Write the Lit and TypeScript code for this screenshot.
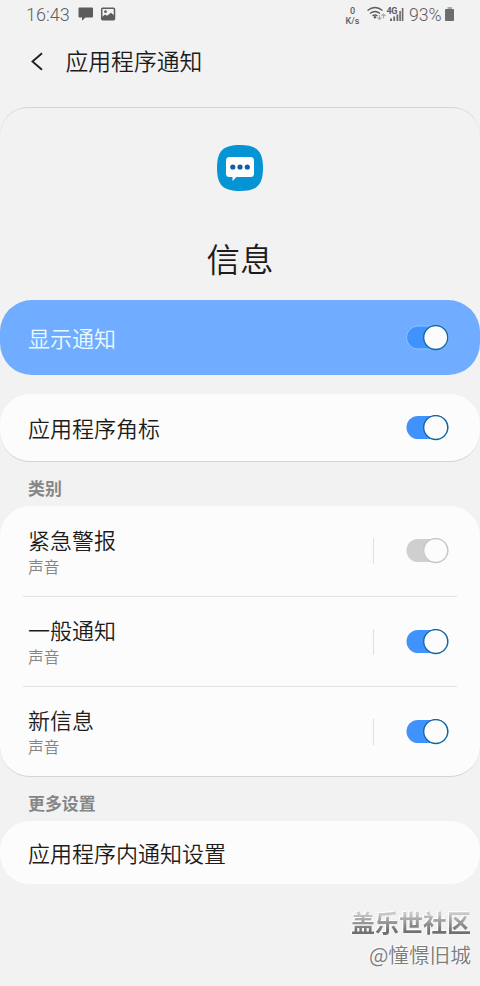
import { LitElement, html, css } from "lit";
import { customElement, property } from "lit/decorators.js";
import { classMap } from "lit/directives/class-map.js";

@customElement("toggle-switch")
class ToggleSwitch extends LitElement {
  @property() tone = "on";

  static styles = css`
    :host { display: block; width: 44px; height: 26px; }
    svg { display: block; }
    .track { fill: #4093ff; }
    .thumb { fill: #fcfcfc; stroke: #14659f; stroke-width: 1.3; }
    .lit .track { stroke: #92c2fd; stroke-width: 1; }
    .off .track { fill: #cfcfcf; }
    .off .thumb { stroke: #c6c6c6; }
  `;

  render() {
    return html`<svg class=${classMap({ lit: this.tone === "lit", off: this.tone === "off" })} width="44" height="26" viewBox="0 0 44 26">
      <rect class="track" x="0.500" y="1" width="42" height="23" rx="11.500"></rect>
      <circle class="thumb" cx="29.700" cy="12.500" r="12"></circle>
    </svg>`;
  }
}

interface Category {
  name: string;
  detail: string;
  tone: string;
}

@customElement("app-root")
class AppRoot extends LitElement {
  private categories: Category[] = [
    { name: "紧急警报", detail: "声音", tone: "off" },
    { name: "一般通知", detail: "声音", tone: "on" },
    { name: "新信息", detail: "声音", tone: "on" },
  ];

  static styles = css`
    :host {
      display: flex; flex-direction: column; box-sizing: border-box;
      width: 480px; height: 986px; overflow: hidden;
      background: #f2f2f2; color: #1c1c1c;
      font-family: Roboto, "Noto Sans CJK SC", sans-serif;
      font-size: 22px; font-weight: 350; white-space: nowrap;
    }
    svg { display: block; flex: none; }
    .status { display: flex; height: 30px; box-sizing: border-box; padding: 0 25px 0 26px; align-items: center; color: #5e5e5e; font-size: 18px; }
    .time { width: 52px; line-height: 30px; }
    .notes { flex: 1; }
    .rate { width: 17px; margin-right: 6px; font-size: 9px; text-align: center; font-weight: 500; padding-top: 1px; }
    .rate div { line-height: 10px; }
    .level { width: 36px; margin-left: 5px; font-size: 17.7px; line-height: 30px; }
    .header { display: flex; height: 77px; box-sizing: border-box; padding: 0 0 13px 29.5px; align-items: center; }
    .title { margin-left: 22px; padding-top: 2px; font-size: 22.8px; line-height: 34px; }
    .hero { box-sizing: border-box; height: 193px; border-top: 1px solid #d6d6d6; border-radius: 28px 28px 0 0; display: flex; flex-direction: column; align-items: center; padding-top: 37px; }
    .app { margin-top: 45px; font-size: 33.5px; line-height: 50px; }
    .bar { display: flex; flex: none; box-sizing: border-box; align-items: center; justify-content: space-between; padding: 0 30px 0 28px; line-height: 32px; }
    .bar span { padding-top: 5px; }
    .master { height: 75px; border-radius: 32px; background: #70acff; color: #e9fbff; margin-bottom: 19px; }
    .card { background: #fcfcfc; border-radius: 30px; border-bottom: 1px solid #d4d4d4; }
    .badge { height: 68px; }
    .more { height: 63px; border-bottom: 0; }
    .label { height: 44px; box-sizing: border-box; padding: 13px 0 0 28px; font-size: 16.9px; line-height: 28px; color: #868686; font-weight: 700; }
    .list { height: 271px; box-sizing: border-box; flex: none; }
    .row { display: flex; box-sizing: border-box; height: 90px; margin: 0 23px; padding: 0 7px 0 5px; align-items: center; }
    .row + .row { border-top: 1px solid #e3e3e3; }
    .copy { flex: 1; padding-top: 5px; }
    .name { line-height: 28px; }
    .detail { font-size: 15.7px; line-height: 24px; color: #858585; }
    .rule { width: 1px; height: 26px; background: #dfdfdf; margin-right: 32px; }
    .credit { margin: 21px 9px 0 0; display: flex; flex-direction: column; align-items: flex-end; font-family: "Noto Sans CJK SC", sans-serif; }
    .site { font-size: 24px; line-height: 33px; font-weight: 700; color: transparent; background: linear-gradient(#c8c8c8 28%, #9c9c9c 50%, #707070 80%); -webkit-background-clip: text; background-clip: text; filter: drop-shadow(-1px -1px 0 #fff); }
    .user { font-size: 20.7px; line-height: 32px; color: #7c7c7c; text-shadow: -1px -1px #fff; }
  `;

  private statusBar() {
    return html`<div class="status">
      <div class="time">16:43</div>
      <svg class="notes" height="30" viewBox="0 0 266 30" preserveAspectRatio="xMinYMid meet">
        <path d="M1.500 7.500H14q1 0 1 1v8q0 1-1 1H7.500L4 20.800v-3.300H1.500q-1 0-1-1V8.500q0-1 1-1Z" fill="#5c5c5c"></path>
        <rect x="23.700" y="8.200" width="12.800" height="11.600" rx="1" fill="none" stroke="#5c5c5c" stroke-width="1.500"></rect>
        <path d="M24 17l3-2.500 2 1.300 4-3 3.500 3V20H24Z" fill="#5c5c5c"></path>
        <circle cx="27.500" cy="11.700" r="1.400" fill="#5c5c5c"></circle>
      </svg>
      <div class="rate"><div>0</div><div>K/s</div></div>
      <svg width="37" height="30" viewBox="0 0 37 30">
        <g fill="none" stroke="#5c5c5c" stroke-width="1.400">
          <path d="M0.500 10.500Q8 4.500 15.500 10.500M3 13.500Q8 9.500 13 13.500M5.500 16Q8 14 10.500 16"></path>
        </g>
        <circle cx="8" cy="17.300" r="1.200" fill="#5c5c5c"></circle>
        <path d="M12.500 15v4.500m-2-2 2 2 2-2M16.500 18.500v-4.500m-2 2 2-2 2 2" fill="none" stroke="#aaa" stroke-width="1.100"></path>
        <text x="19.500" y="13.500" font-size="9" font-weight="700" fill="#5c5c5c" textLength="11">4G</text>
        <path d="M23 18.500h2v2.500h-2zM26.300 16.500h1.800v4.500h-1.800zM29.500 14.500h1.800v6.500h-1.800zM32.300 11h1.600v10h-1.600zM34.800 8h1.600v13h-1.600z" fill="#6a6a6a"></path>
      </svg>
      <div class="level">93%</div>
      <svg width="10" height="30" viewBox="0 0 10 30">
        <path d="M2.500 7h4.500v2H2.500z" fill="#aaa"></path>
        <rect x="0" y="9" width="9" height="12" rx="0.700" fill="#6d6d6d"></rect>
      </svg>
    </div>`;
  }

  render() {
    return html`
      ${this.statusBar()}
      <div class="header">
        <svg width="14" height="22" viewBox="0 0 14 22"><path d="M12 2.200 2.500 10.500l9.500 8.300" fill="none" stroke="#222" stroke-width="1.900"></path></svg>
        <div class="title">应用程序通知</div>
      </div>
      <div class="hero">
        <svg width="46" height="46" viewBox="0 0 46 46">
          <path d="M23 0C40 0 46 6 46 23S40 46 23 46 0 40 0 23 6 0 23 0Z" fill="#0595d5"></path>
          <path d="M12.500 12H33.500q3.500 0 3.500 3.500V28.500q0 3.500-3.500 3.500H19.500L15.500 36V32H12.500Q9 32 9 28.500V15.500Q9 12 12.500 12Z" fill="#fff"></path>
          <g fill="#1659a5"><circle cx="15.800" cy="22" r="2.600"></circle><circle cx="23" cy="22" r="2.600"></circle><circle cx="30.300" cy="22" r="2.600"></circle></g>
        </svg>
        <div class="app">信息</div>
      </div>
      <div class="bar master"><span>显示通知</span><toggle-switch tone="lit"></toggle-switch></div>
      <div class="bar card badge"><span>应用程序角标</span><toggle-switch></toggle-switch></div>
      <div class="label">类别</div>
      <div class="card list">
        ${this.categories.map((c) => html`<div class="row">
          <div class="copy"><div class="name">${c.name}</div><div class="detail">${c.detail}</div></div>
          <div class="rule"></div>
          <toggle-switch tone=${c.tone}></toggle-switch>
        </div>`)}
      </div>
      <div class="label">更多设置</div>
      <div class="bar card more"><span>应用程序内通知设置</span></div>
      <div class="credit"><div class="site">盖乐世社区</div><div class="user">@憧憬旧城</div></div>
    `;
  }
}
